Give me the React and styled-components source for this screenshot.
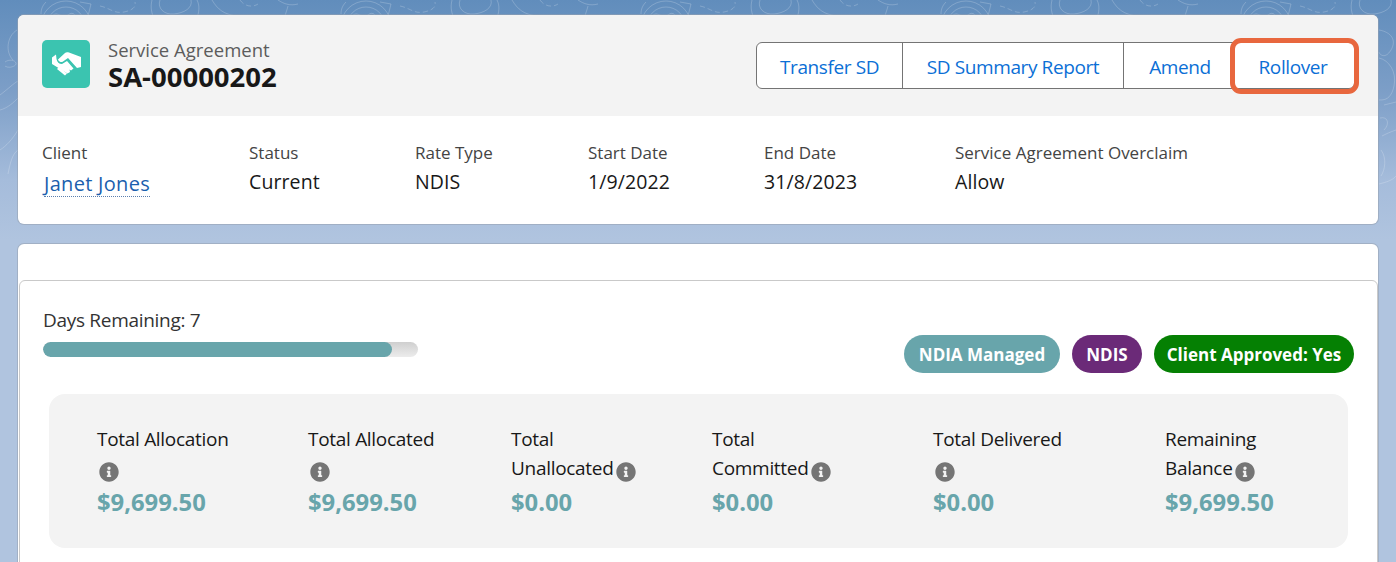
import styled, { createGlobalStyle } from "styled-components";
import { FaInfoCircle } from "react-icons/fa";

const GlobalStyle = createGlobalStyle`
  html, body {
    margin: 0;
    padding: 0;
    height: 100%;
    overflow: hidden;
  }
  body {
    font-family: "Open Sans", "Noto Sans", sans-serif;
    color: #181818;
    background: #b0c4df;
  }
`;

const Page = styled.div`
  position: relative;
  height: 562px;
  box-sizing: border-box;
  padding: 15px 18px 0;
  overflow: hidden;
  background: linear-gradient(180deg, #618dbc 0%, #7c9ec7 90px, #a5bcdb 180px, #b0c4df 240px);
`;

const Topo = styled.svg`
  position: absolute;
  top: 0;
  left: 0;
  width: 1396px;
  height: 240px;
  fill: none;
  stroke: #fff;
  stroke-opacity: 0.2;
  stroke-width: 1;
`;

const Card = styled.section`
  position: relative;
  background: #fff;
  border-radius: 6px;
  box-shadow: 0 0 0 1px rgba(150, 160, 175, 0.55);
  overflow: hidden;
`;

const Header = styled.header`
  display: flex;
  align-items: center;
  justify-content: space-between;
  height: 101px;
  box-sizing: border-box;
  padding: 0 20px 3px 24px;
  background: #f3f3f3;
`;

const Identity = styled.div`
  display: flex;
  align-items: center;
  gap: 18px;
`;

const IconTile = styled.div`
  width: 48px;
  height: 48px;
  border-radius: 5px;
  background: #3bc4b0;
`;

const TileIcon = styled.svg`
  display: block;
  fill: #fff;
`;

const Titles = styled.div`
  padding-top: 2px;
`;

const Eyebrow = styled.div`
  font-size: 18.5px;
  line-height: 24px;
  color: #5c5c5c;
`;

const RecordName = styled.div`
  font-size: 27.5px;
  line-height: 30px;
  font-weight: 700;
  color: #181818;
`;

const ButtonGroup = styled.div`
  display: flex;
  height: 47px;
  box-sizing: border-box;
  margin: 3px 3px 0 0;
  border: 1px solid #747474;
  border-radius: 6px;
  background: #fff;
`;

const GroupButton = styled.button`
  position: relative;
  width: ${(props) => props.$width}px;
  padding: 2px ${(props) => props.$inset}px 0 0;
  border: 0;
  border-left: ${(props) => (props.$divider ? "1px solid #747474" : "0")};
  background: transparent;
  font-family: inherit;
  font-size: 19px;
  letter-spacing: -0.4px;
  color: #0b6fd6;
`;

const Highlight = styled.span`
  position: absolute;
  top: -5px;
  left: -6px;
  right: -5px;
  bottom: -6px;
  border: 5px solid #e8673e;
  border-radius: 11px;
`;

const Details = styled.div`
  display: grid;
  grid-template-columns: 207px 166px 173px 176px 191px auto;
  padding: 26px 24px 27px;
`;

const Label = styled.div`
  font-size: 17px;
  line-height: 22px;
  color: #444;
`;

const Value = styled.div`
  margin-top: 4px;
  font-size: 19.5px;
  line-height: 28px;
  letter-spacing: 0.1px;
  color: #181818;
`;

const ClientLink = styled.a`
  display: inline-block;
  margin: 7px 0 0 2px;
  font-size: 20px;
  line-height: 25px;
  letter-spacing: 0.3px;
  color: #1b5fae;
  border-bottom: 1px dotted #5b7fae;
`;

const Panel = styled(Card)`
  margin-top: 20px;
  padding-top: 36px;
  height: 320px;
`;

const InnerCard = styled.div`
  border: 1px solid #c9c9c9;
  border-radius: 6px 6px 0 0;
  height: 100%;
  box-sizing: border-box;
  margin-left: 1px;
  padding: 25px 23px 0;
`;

const TopRow = styled.div`
  display: flex;
  justify-content: space-between;
  align-items: flex-end;
`;

const Remaining = styled.div`
  width: 375px;
`;

const RemainingText = styled.div`
  font-size: 19px;
  line-height: 28px;
  letter-spacing: -0.3px;
  color: #333;
`;

const Track = styled.div`
  height: 15px;
  margin-top: 8px;
  margin-bottom: 16px;
  border-radius: 8px;
  background: linear-gradient(180deg, #cfcfcf, #ececec);
  overflow: hidden;
`;

const Fill = styled.div`
  height: 100%;
  border-radius: 8px;
  background: #68a5ab;
`;

const Badges = styled.div`
  display: flex;
  gap: 12px;
`;

const Badge = styled.span`
  display: flex;
  align-items: center;
  justify-content: center;
  width: ${(props) => props.$width}px;
  height: 38px;
  border-radius: 19px;
  font-size: 17px;
  font-weight: 700;
  color: #fff;
  background: ${(props) => props.$color};
`;

const Stats = styled.div`
  display: grid;
  grid-template-columns: 211px 203px 201px 221px 232px auto;
  margin: 21px 6px 0;
  padding: 29px 48px 29px;
  height: 154px;
  box-sizing: border-box;
  border-radius: 16px;
  background: #f3f3f3;
`;

const Stat = styled.div`
  display: flex;
  flex-direction: column;
  justify-content: flex-end;
  height: 96px;
`;

const StatLabel = styled.div`
  width: 140px;
  font-size: 19px;
  line-height: 29px;
  letter-spacing: -0.3px;
  color: #181818;
`;

const InfoIcon = styled(FaInfoCircle)`
  display: inline-block;
  vertical-align: -7px;
  width: 20px;
  height: 20px;
  margin-left: 2px;
  color: #757575;
`;

const StatValue = styled.div`
  margin-top: 3px;
  font-size: 23.8px;
  line-height: 33px;
  font-weight: 700;
  color: #68a5ab;
`;

const details = [
  ["Status", "Current"],
  ["Rate Type", "NDIS"],
  ["Start Date", "1/9/2022"],
  ["End Date", "31/8/2023"],
  ["Service Agreement Overclaim", "Allow"],
];

const buttons = [
  { text: "Transfer SD", width: 145, inset: 0, divider: false },
  { text: "SD Summary Report", width: 221, inset: 0, divider: true },
  { text: "Amend", width: 113, inset: 0, divider: true },
  { text: "Rollover", width: 118, inset: 4, divider: false },
];

const stats = [
  ["Total Allocation", "$9,699.50"],
  ["Total Allocated", "$9,699.50"],
  ["Total Unallocated", "$0.00"],
  ["Total Committed", "$0.00"],
  ["Total Delivered", "$0.00"],
  ["Remaining Balance", "$9,699.50"],
];

const badges = [
  ["NDIA Managed", "#68a5ab", 156],
  ["NDIS", "#6b2a78", 70],
  ["Client Approved: Yes", "#058003", 200],
];

const App = () => (
  <>
    <GlobalStyle />
    <Page>
      <Topo viewBox="0 0 1396 240">
        <defs>
          <pattern id="topo" width="300" height="240" patternUnits="userSpaceOnUse">
            <circle cx="66" cy="26" r="25" />
            <circle cx="66" cy="26" r="19" />
            <path d="M52 16c6-6 10 4 16-1s8 2 12 8" />
            <path d="M80 2l11 2-3 12M46 2c-4 4-5 8-5 12" />
            <path d="M100 6c10 2 14 8 24 6s12-6 11-10" strokeDasharray="5 3" />
            <path d="M160 0c-3 8 4 15 14 14s19-6 17-14M152 0c-2 8 0 14 2 18M197 0c3 6 2 12 0 18" />
            <path d="M212 0c6 10 12 14 24 16s24 2 34 6" />
            <path d="M240 0c4 6 12 8 18 4" strokeDasharray="5 3" />
            <path d="M278 0c6 4 12 6 20 4M288 6c-1 4-2 6-3 10" />
          </pattern>
        </defs>
        <rect width="1396" height="16" fill="url(#topo)" stroke="none" />
        <path d="M17 30c-10 6-12 22-4 30M5 62c4-3 10-2 11 1s-7 6-11 3M0 95c8-6 14-12 18-14M0 110c8-2 14-8 18-12M18 130c-6 10-12 16-18 20M18 150c-6 4-8 14-10 24" />
        <path d="M1379 30c12 2 18 10 12 20s-12 4-12 2M1379 58c10 2 18 14 15 28s-10 14-15 14M1384 105l12-3M1380 118c8-2 10 6 4 12M1396 130c-6 2-10 4-14 6M1381 150c6 8 4 20 0 26M1379 184c8-2 14-4 17-8" />
      </Topo>
      <Card>
        <Header>
          <Identity>
            <IconTile>
              <TileIcon viewBox="0 0 48 48" width="48" height="48">
                <path d="M39 17V27L35 28L26 18L21 21.5C19.5 22.5 17.5 22 16.5 20.5L16 19.500L23 13C24 12 25.500 12 27 12.500L31 14Z" />
                <path d="M10 17.500L14 14.500L14.500 19C15 22 17 24 20 24L25 21L31.500 28.500L29 30.500L27.500 29.500L28 32L25.500 33.500L10 24Z" />
                <path d="M15 29l2-2l8 6.500l-2 2Z" />
              </TileIcon>
            </IconTile>
            <Titles>
              <Eyebrow>Service Agreement</Eyebrow>
              <RecordName>SA-00000202</RecordName>
            </Titles>
          </Identity>
          <ButtonGroup>
            {buttons.map(({ text, width, inset, divider }) => (
              <GroupButton key={text} $width={width} $inset={inset} $divider={divider}>
                {text}
                {text === "Rollover" && <Highlight />}
              </GroupButton>
            ))}
          </ButtonGroup>
        </Header>
        <Details>
          <div>
            <Label>Client</Label>
            <ClientLink>Janet Jones</ClientLink>
          </div>
          {details.map(([label, value]) => (
            <div key={label}>
              <Label>{label}</Label>
              <Value>{value}</Value>
            </div>
          ))}
        </Details>
      </Card>
      <Panel>
        <InnerCard>
          <TopRow>
            <Remaining>
              <RemainingText>Days Remaining: 7</RemainingText>
              <Track>
                <Fill style={{ width: `${(349 / 375) * 100}%` }} />
              </Track>
            </Remaining>
            <Badges>
              {badges.map(([text, color, width]) => (
                <Badge key={text} $color={color} $width={width}>
                  {text}
                </Badge>
              ))}
            </Badges>
          </TopRow>
          <Stats>
            {stats.map(([label, value]) => (
              <Stat key={label}>
                <StatLabel>
                  {label}
                  <InfoIcon />
                </StatLabel>
                <StatValue>{value}</StatValue>
              </Stat>
            ))}
          </Stats>
        </InnerCard>
      </Panel>
    </Page>
  </>
);

export default App;
